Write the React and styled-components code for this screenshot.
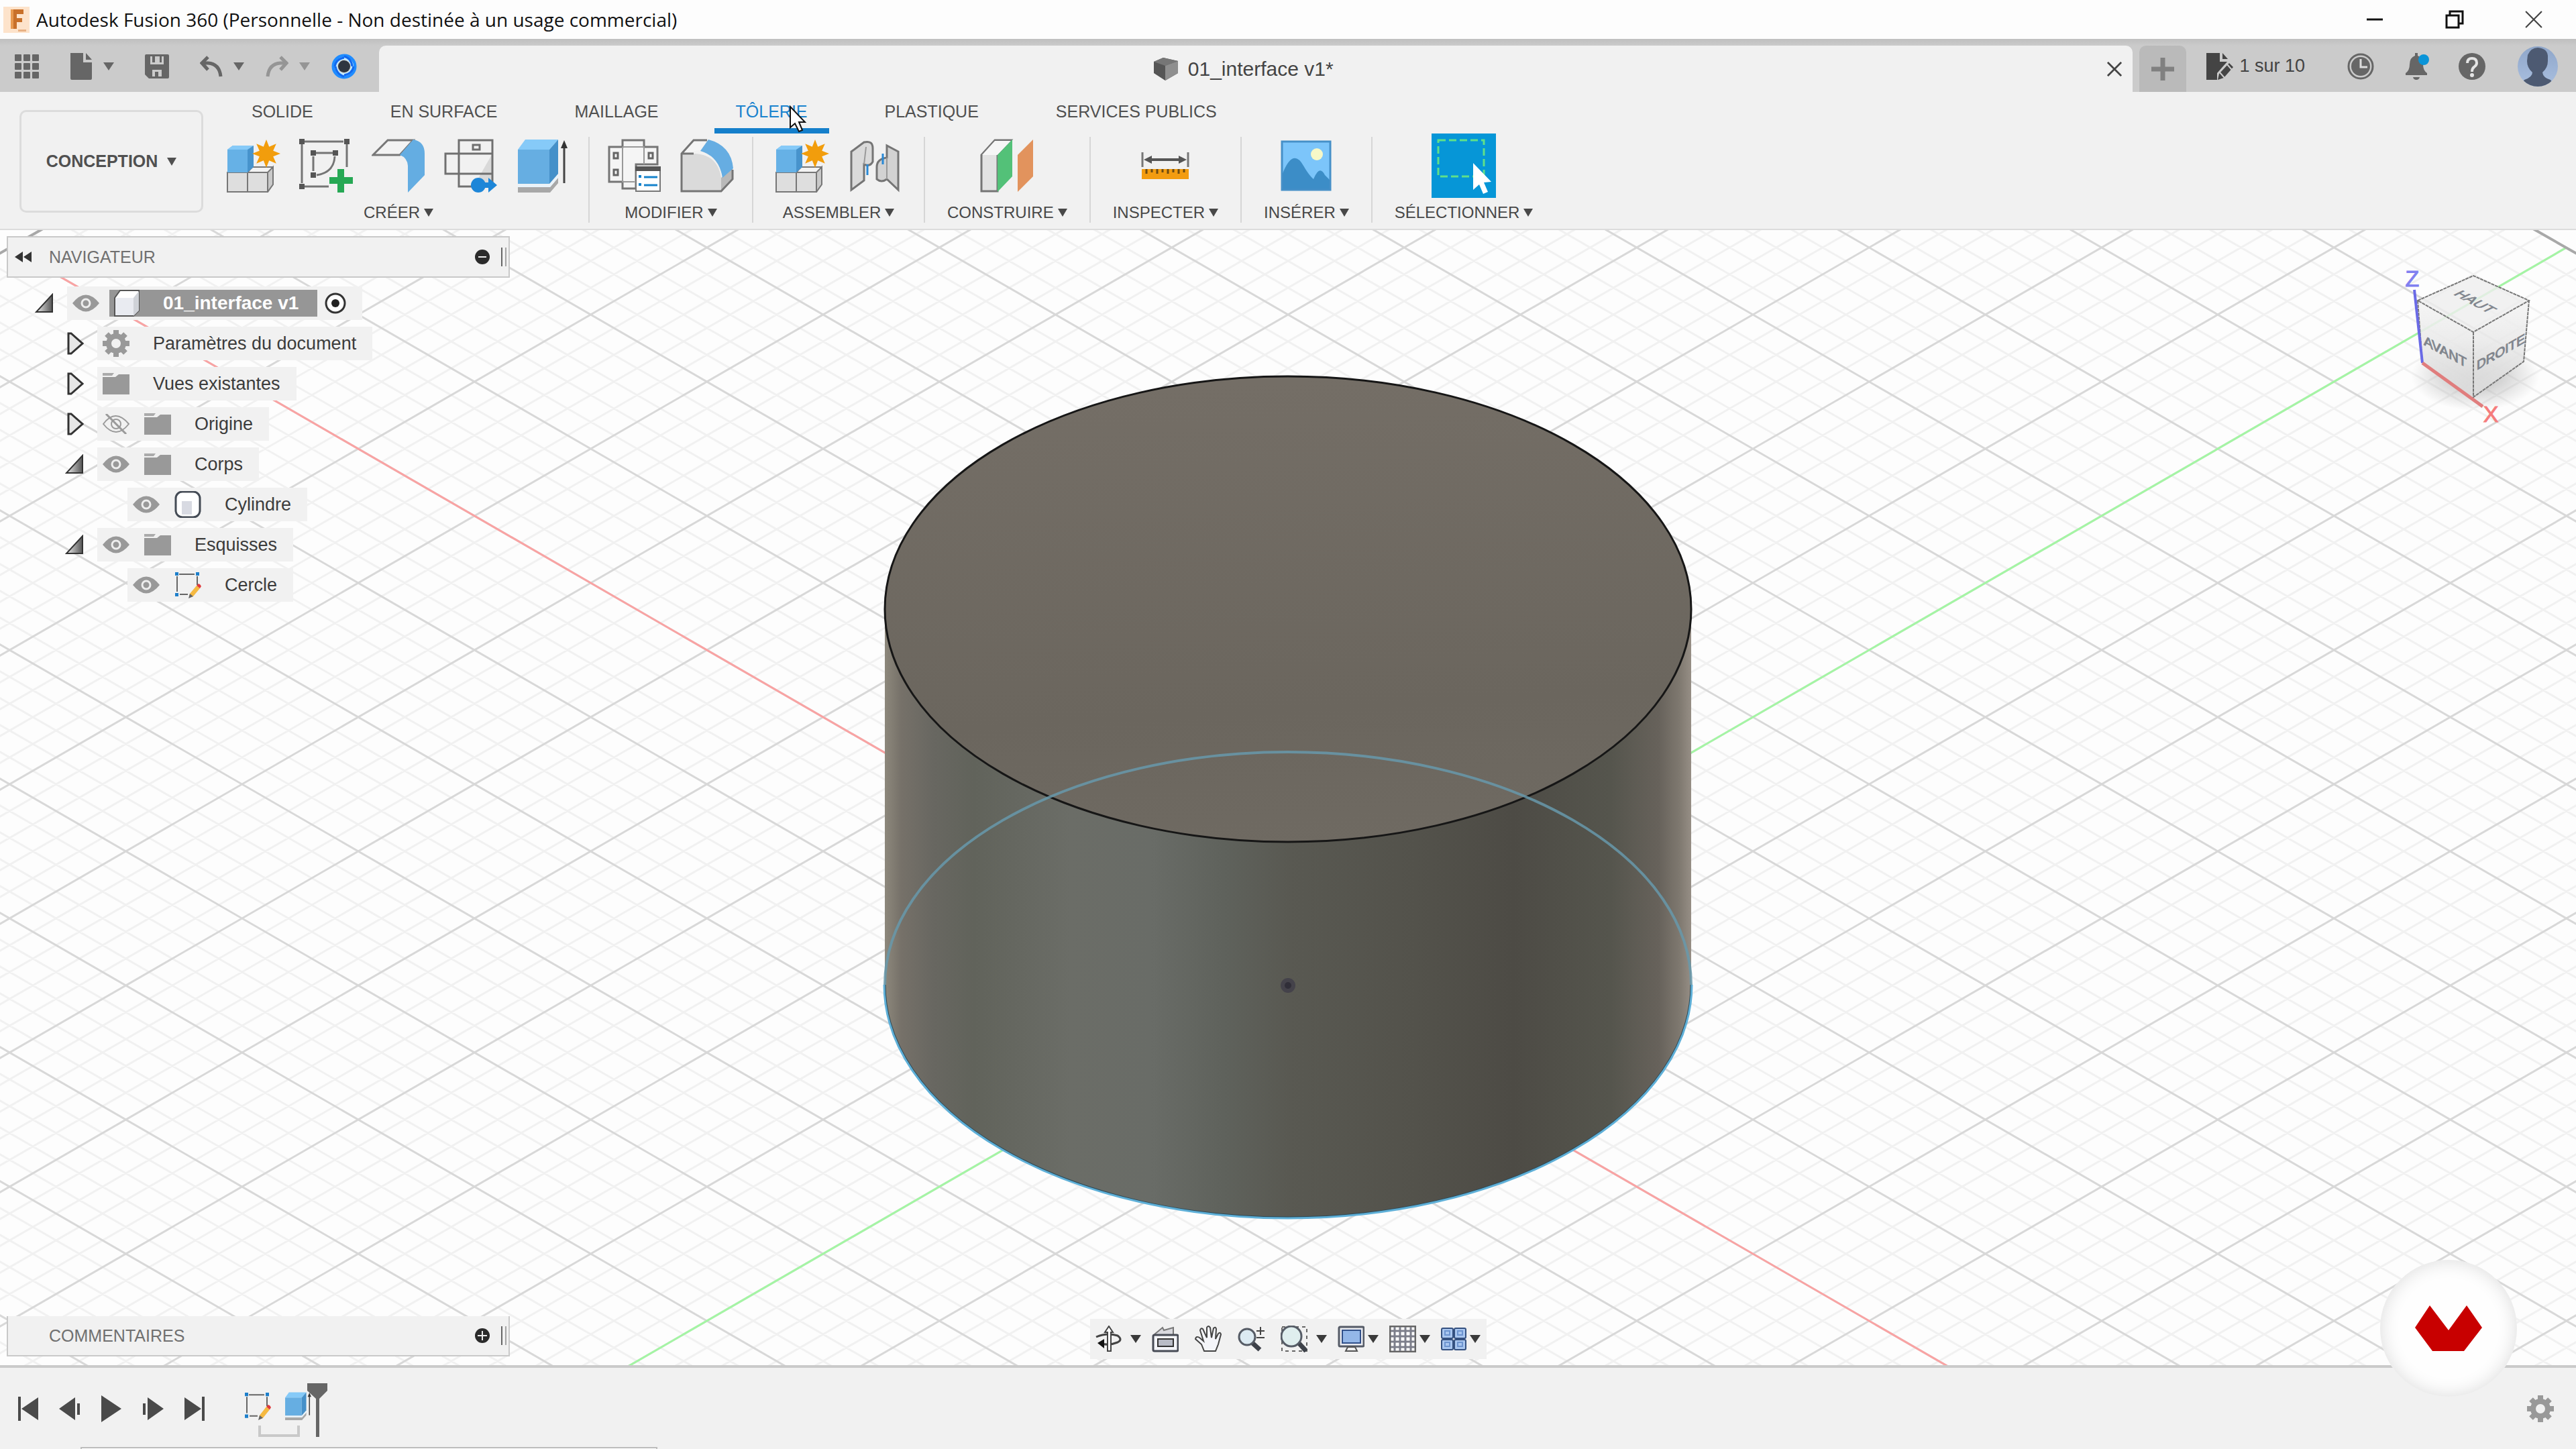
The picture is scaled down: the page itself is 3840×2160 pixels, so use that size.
import React from 'react'
import styled, { createGlobalStyle, css } from 'styled-components'

const GlobalStyle = createGlobalStyle`
	* { box-sizing: border-box; }
	body {
		margin: 0;
		background: #f1f1f1;
		font-family: "Liberation Sans", Arial, sans-serif;
		color: #444;
	}
	button {
		display: flex;
		align-items: center;
		padding: 0;
		border: 0;
		background: none;
		color: inherit;
		font: inherit;
		cursor: pointer;
	}
	ul { margin: 0; padding: 0; list-style: none; }
	svg { display: block; flex: none; }
`

const Window = styled.div`
	display: flex;
	flex-direction: column;
	min-height: 100vh;
	overflow: hidden;
`

/* ---------- title bar ---------- */

const TitleBar = styled.header`
	display: flex;
	align-items: center;
	gap: 10px;
	height: 58px;
	padding: 0 50px 0 5px;
	background: #fdfdfd;
`

const AppTitle = styled.h1`
	flex: 1;
	margin: 0;
	color: #111;
	font: 400 28px "Open Sans", "Noto Sans", sans-serif;
`

const WindowButtons = styled.div`
	display: flex;
	gap: 91px;
`

/* ---------- tab strip ---------- */

const TabStrip = styled.div`
	display: flex;
	align-items: stretch;
	height: 79px;
	padding: 10px 27px 0 0;
	background: linear-gradient(#bfbfbf, #cbcbcb 10px);
`

const QuickBar = styled.div`
	display: flex;
	align-items: center;
	gap: 46px;
	width: 565px;
	padding: 0 0 8px 22px;
	color: #666;
`

const QuickGroup = styled.div`
	display: flex;
	align-items: center;
	gap: 32px;
`

const QuickButton = styled.button`
	gap: 16px;
	color: ${props => props.$faded ? '#959595' : '#666'};
`

const DocumentTab = styled.div`
	flex: 1;
	display: flex;
	align-items: center;
	padding: 0 16px 0 0;
	border-radius: 10px 10px 0 0;
	background: #f1f1f1;
`

const DocumentName = styled.div`
	flex: 1;
	display: flex;
	justify-content: center;
	align-items: center;
	gap: 14px;
	font-size: 30px;
`

const NewTab = styled.button`
	justify-content: center;
	width: 70px;
	margin: 0 30px 0 10px;
	border-radius: 10px 10px 0 0;
	background: #bababa;
`

const Account = styled.div`
	display: flex;
	align-items: center;
	gap: 43px;
	padding-bottom: 8px;
	color: #666;
`

const Jobs = styled.button`
	gap: 8px;
	margin-right: 20px;
	color: #444;
	font-size: 27px;
`

const Profile = styled.button`
	margin-left: 5px;
`

/* ---------- ribbon ---------- */

const Ribbon = styled.div`
	display: flex;
	padding-left: 29px;
	border-bottom: 2px solid #dcdcdc;
	background: #f1f1f1;
`

const Workspace = styled.button`
	justify-content: center;
	gap: 14px;
	width: 274px;
	height: 153px;
	margin: 27px 8px 24px 0;
	border: 3px solid #dcdcdc;
	border-radius: 10px;
	font-size: 25px;
	font-weight: 700;
	color: #505050;
`

const RibbonBody = styled.div`
	flex: 1;
`

const Tabs = styled.div`
	display: flex;
	gap: 51px;
	padding-left: 32px;
`

const Tab = styled.button`
	position: relative;
	padding: 15px 32px 11px;
	border-bottom: 8px solid ${props => props.$active ? '#157fcb' : 'transparent'};
	color: ${props => props.$active ? '#1b83ce' : '#505050'};
	font-size: 25px;
	line-height: 28px;
`

const Pointer = styled.span`
	position: absolute;
	top: 20px;
	left: 111px;
	z-index: 2;
`

const Groups = styled.div`
	display: flex;
`

const Group = styled.section`
	display: flex;
	flex-direction: column;
	align-items: center;
	gap: 8px;
	padding: 0 ${props => props.$tight ? 27 : 33}px 10px;

	& + & {
		border-left: 2px solid #dadada;
		border-image: linear-gradient(#f1f1f1 6px, #d6d6d6 6px, #d6d6d6 132px, #f1f1f1 132px) 1;
	}
`

const GroupTools = styled.div`
	display: flex;
	align-items: center;
	gap: 28px;
	height: 96px;
`

const SelectTool = styled.button`
	justify-content: center;
	width: 96px;
	height: 96px;
	background: #0696d7;
`

const GroupLabel = styled.button`
	gap: 6px;
	font-size: 24px;
	line-height: 28px;
	color: #484848;
`

/* ---------- viewport ---------- */

const Viewport = styled.main`
	position: relative;
	flex: 1;
	display: flex;
	flex-direction: column;
	justify-content: space-between;
	background: #fdfdfd;
`

const Scene = styled.svg`
	position: absolute;
	inset: 0;
	width: 100%;
	height: 100%;
`

const Layer = styled.div`
	position: relative;
	display: flex;
	justify-content: space-between;
	align-items: flex-start;
	padding: 9px 46px 0 10px;
`

const Browser = styled.aside`
	width: 750px;
`

const PanelHeader = styled.div`
	display: flex;
	align-items: center;
	gap: 12px;
	width: 750px;
	height: 62px;
	padding: 0 3px 0 10px;
	border: 2px solid #c9c9c9;
	background: #f1f1f1;
	font-size: 25px;
	color: #707070;

	${props => props.$docked && css`
		height: 60px;
		margin-bottom: 4px;
		border-top: 0;
	`}
`

const PanelTitle = styled.span`
	flex: 1;
	padding-left: ${props => props.$indent ? 51 : 13}px;
`

const Grip = styled.span`
	width: 8px;
	height: 28px;
	margin-left: 4px;
	border-left: 2px solid #666;
	border-right: 2px solid #a5a5a5;
`

const Tree = styled.ul`
	display: flex;
	flex-direction: column;
	gap: 10px;
	padding: 13px 0 0;
`

const TreeRow = styled.li`
	display: flex;
	align-items: center;
	gap: 20px;
	height: 50px;
	padding-left: ${props => 42 + props.$level * 45}px;
`

const Twisty = styled.button`
	width: 28px;
	height: 40px;
	justify-content: center;
`

const NodeBody = styled.div`
	display: flex;
	align-items: center;
	gap: 22px;
	height: 50px;
	padding: 0 24px 0 8px;
	background: #f1f1f1;
	font-size: 27px;
	color: #3c3c3c;
`

const NodeName = styled.span`
	padding-left: 13px;
`

const RootName = styled.span`
	display: flex;
	align-items: center;
	gap: 34px;
	height: 40px;
	margin: 0 -11px 0 -7px;
	padding: 0 28px 0 6px;
	background: #969696;
	color: #fff;
	font-size: 28px;
	font-weight: 700;
`

const BottomLayer = styled.div`
	position: relative;
	display: grid;
	grid-template-columns: 1fr auto 1fr;
	align-items: end;
	padding: 0 10px 9px;
`

const NavBar = styled.div`
	display: flex;
	align-items: center;
	gap: 16px;
	height: 60px;
	padding: 0 9px 0 7px;
	background: #f1f1f1;
	color: #3a3a3a;
`

const NavTool = styled.button`
	gap: ${props => props.$wide ? 13 : 5}px;
	padding-right: ${props => props.$plain ? 8 : 0}px;
`

const Brand = styled.a`
	position: absolute;
	right: 88px;
	bottom: -47px;
	z-index: 3;
	display: flex;
	justify-content: center;
	align-items: center;
	width: 204px;
	height: 204px;
	border-radius: 50%;
	background: #fefefe;
	box-shadow: inset 0 0 28px #dcdcdc;
`

/* ---------- timeline ---------- */

const Timeline = styled.footer`
	border-top: 4px solid #cacaca;
	background: #f1f1f1;
`

const TimelineRow = styled.div`
	display: flex;
	align-items: flex-start;
	padding: 23px 33px 15px 26px;
`

const Transport = styled.div`
	display: flex;
	gap: 30px;
	padding-top: 18px;
	margin-right: 58px;
`

const Features = styled.div`
	display: flex;
	flex-direction: column;
	gap: 8px;
	padding-top: 13px;
`

const FeatureRow = styled.div`
	display: flex;
	gap: 20px;
`

const Bracket = styled.span`
	width: 62px;
	height: 17px;
	margin-left: 21px;
	border: 4px solid #c9c9c9;
	border-top: 0;
`

const Marker = styled.div`
	flex: 1;
	margin-left: -8px;
`

const SettingsButton = styled.button`
	padding-top: 18px;
`

const TaskEdge = styled.div`
	width: 860px;
	height: 3px;
	margin-left: 120px;
	border: 2px solid #bdbdbd;
	border-bottom: 0;
	background: #fff;
`

/* ---------- icons ---------- */

const Icon = ({ w = 40, h = w, box, children, ...rest }) => (
	<svg width={w} height={h} viewBox={box || `0 0 ${w} ${h}`} fill="none" aria-hidden="true" {...rest}>{children}</svg>
)

const Caret = ({ size = 16 }) => (
	<Icon w={size} h={12} box="0 0 16 12" preserveAspectRatio="none"><path d="M0 0H16L8 12Z" fill="currentColor" /></Icon>
)

const AppLogo = () => (
	<Icon w={39}>
		<rect width="39" height="39" fill="#fde3cb" />
		<path d="M11 4H30V11H20V17H28V23H20V33H11Z" fill="#c8702a" />
		<path d="M11 4H15V33H11Z" fill="#e8994f" />
		<path d="M22 34H34V37H22Z" fill="#e8b184" />
	</Icon>
)

const GridIcon = () => (
	<Icon w={36}>
		{[0, 13, 26].map(y => [0, 13, 26].map(x => (
			<rect key={`${x}-${y}`} x={x} y={y} width="10" height="10" rx="1" fill="currentColor" />
		)))}
	</Icon>
)

const FileIcon = () => (
	<Icon w={34} h={40}><path d="M1 0H20V14H33V38Q33 40 31 40H3Q1 40 1 38ZM24 0L33 10H24Z" fill="currentColor" /></Icon>
)

const SaveIcon = () => (
	<Icon w={36}>
		<path fillRule="evenodd" d="M2 0H34Q36 0 36 2V34Q36 36 34 36H6L0 30V2Q0 0 2 0ZM8 3V15H28V3ZM11 23V33H15V26H20V33H25V23Z" fill="currentColor" />
		<path d="M11 3H15V12H11ZM22 3H25V12H22Z" fill="currentColor" />
	</Icon>
)

const UndoIcon = ({ flip }) => (
	<Icon w={34} h={32} box="0 0 34 32">
		<g transform={flip ? 'translate(34 0) scale(-1 1)' : undefined} stroke="currentColor" strokeWidth="5">
			<path d="M12 2L3 11L12 21" />
			<path d="M3 11H12Q29 12 31 31" />
		</g>
	</Icon>
)

const ExtensionIcon = () => (
	<Icon w={38} h={40}>
		<circle cx="19" cy="20" r="16" stroke="#1f8cff" strokeWidth="5" />
		<circle cx="19" cy="20" r="12" stroke="#c3ecff" strokeWidth="4" />
		<path d="M19 5Q30 8 31 20M33 20Q31 31 19 33M19 35Q8 32 6 20M5 20Q7 9 19 7" stroke="#1268ee" strokeWidth="3" />
		<circle cx="19" cy="20" r="9" fill="#2e3540" />
	</Icon>
)

const DocumentIcon = () => (
	<Icon w={38} h={36}>
		<path d="M1 7L15 1L37 6V24L18 35L1 24Z" fill="#555" />
		<path d="M1 7L15 1L37 6L18 13Z" fill="#767676" />
		<path d="M18 13L37 6V24L18 35Z" fill="#8f8f8f" />
	</Icon>
)

const CloseIcon = ({ size = 24, width = 3 }) => (
	<Icon w={size} box="0 0 24 24"><path d="M1 1L23 23M23 1L1 23" stroke="currentColor" strokeWidth={width} /></Icon>
)

const JobIcon = () => (
	<Icon w={41} h={40}>
		<path d="M0 0H20V13H31L16 30V40H0ZM24 0L32 9H24Z" fill="currentColor" />
		<path d="M19 31L34 15L40 21L26 37L17 40Z" fill="currentColor" />
		<path d="M31 17L38 25M20 29L27 37" stroke="#cbcbcb" strokeWidth="2" />
	</Icon>
)

const ClockIcon = () => (
	<Icon>
		<circle cx="20" cy="20" r="18" stroke="currentColor" strokeWidth="3" />
		<circle cx="20" cy="20" r="14" fill="currentColor" />
		<path d="M20 9V21H30" stroke="#dcdcdc" strokeWidth="3" />
	</Icon>
)

const BellIcon = () => (
	<Icon>
		<path d="M18 0H22V4Q30 7 30 17Q30 26 36 30V33H4V30Q10 26 10 17Q10 7 18 4ZM15 36H25Q24 40 20 40Q16 40 15 36Z" fill="currentColor" />
		<circle cx="31" cy="10" r="8" fill="#0a94d8" />
	</Icon>
)

const HelpIcon = () => (
	<Icon>
		<circle cx="20" cy="20" r="20" fill="currentColor" />
		<path d="M13 15Q13 8 20 8Q27 8 27 15Q27 18 23 21Q20 23 20 28" stroke="#e4e4e4" strokeWidth="4" />
		<circle cx="20" cy="33" r="3" fill="#e4e4e4" />
	</Icon>
)

const Avatar = () => (
	<Icon w={60}>
		<defs>
			<clipPath id="avatar"><circle cx="30" cy="30" r="30" /></clipPath>
			<linearGradient id="avatarSky" x2="0" y2="1"><stop stopColor="#8fa6c9" /><stop offset="1" stopColor="#a9bfe0" /></linearGradient>
		</defs>
		<g clipPath="url(#avatar)">
			<rect width="60" height="60" fill="url(#avatarSky)" />
			<path d="M15 13Q20 2 30 2Q44 3 45 14V22Q45 32 37 39Q38 47 49 50L56 60H4L10 50Q22 46 22 39Q14 32 14 22Z" fill="#4d5a72" />
		</g>
	</Icon>
)

const Star = () => {
	const points = Array.from({ length: 16 }, (_, i) => {
		const r = i % 2 ? 11 : 21
		const a = i * Math.PI / 8
		return `${(59 + r * Math.sin(a)).toFixed(1)},${(22 - r * Math.cos(a)).toFixed(1)}`
	}).join(' ')
	return <polygon points={points} fill="#f29d0c" />
}

const ComponentIcon = () => (
	<Icon w={80}>
		<path d="M31 50L40 42H70V68L62 80H31Z" fill="#c9c9c9" />
		<path d="M31 50L39 43H69L62 50Z" fill="#f3f3f3" />
		<path d="M1 50H31V79H1ZM31 50H61V79H31Z" fill="#dedede" stroke="#777" strokeWidth="2" />
		<path d="M61 50L69 42V68L61 79M31 50L38 42H69" stroke="#777" strokeWidth="2" />
		<path d="M1 16L9 10H40L31 16V50H1Z" fill="#66b1e6" />
		<path d="M1 16L9 10H40L31 16Z" fill="#86caf8" />
		<path d="M31 16L40 10V42L31 50Z" fill="#4793cc" />
		<Star />
	</Icon>
)

const SketchCreateIcon = () => (
	<Icon w={80}>
		<path d="M8 4H66M4 8V66M8 71H44M71 8V42" stroke="#757575" strokeWidth="3" />
		<path d="M24 21H50M21 26V48M53 26Q52 50 26 54" stroke="#757575" strokeWidth="3" />
		<path d="M0 0H8V8H0ZM67 0H75V8H67ZM0 67H8V75H0ZM17 17H25V25H17ZM50 17H58V25H50ZM17 50H25V58H17Z" fill="#555" />
		<path d="M57 45H67V57H80V67H67V80H57V67H45V57H57Z" fill="#26a854" />
	</Icon>
)

const FlangeIcon = () => (
	<Icon w={80}>
		<path d="M24 2H62L42 24H2Z" fill="#f3f3f3" stroke="#777" strokeWidth="3" />
		<path d="M62 1Q79 4 79 22V54L54 80V40Q53 28 42 24Z" fill="#64ade2" />
	</Icon>
)

const UnfoldIcon = () => (
	<Icon w={80}>
		<path d="M22 2H72V71H22Z" fill="#f1f1f1" />
		<path d="M72 22L44 71H72Z" fill="#d9d9d9" />
		<path d="M22 2H72V71H22ZM2 22H72V52H2Z" stroke="#707070" strokeWidth="3" />
		<path d="M43 9H53V16H43Z" stroke="#707070" strokeWidth="3" />
		<circle cx="51" cy="69" r="11" fill="#1d86d8" />
		<path d="M56 65H66V58L79 69L66 80V73H56Z" fill="#1d86d8" />
	</Icon>
)

const ExtrudeIcon = ({ size = 80 }) => (
	<Icon w={size} box="0 0 80 80">
		<path d="M2 72L50 72L62 58V66L50 80H2Z" fill="#a8a8a8" />
		<path d="M2 68H49L62 53V58L50 72H2Z" fill="#e9f3fa" />
		<path d="M2 16L13 1H62L49 16Z" fill="#86caf8" />
		<path d="M2 16H49V67H2Z" fill="#66aee2" />
		<path d="M49 16L62 1V52L49 67Z" fill="#4590c9" />
		<path d="M71 12V66" stroke="#444" strokeWidth="3" />
		<path d="M71 2L76 14H66Z" fill="#333" />
	</Icon>
)

const RulesIcon = () => (
	<Icon w={80}>
		<path d="M22 2H54V12H74V38H42V74H22V64H2V12H22Z" fill="#f5f5f5" stroke="#757575" strokeWidth="3" />
		<path d="M22 12H54V38M22 12V64H40" stroke="#999" strokeWidth="2" />
		<path d="M9 21H15V29H9ZM61 21H67V29H61ZM9 46H15V54H9Z" stroke="#666" strokeWidth="3" />
		<rect x="42" y="42" width="36" height="36" fill="#fff" stroke="#777" strokeWidth="2" />
		<path d="M41 41H79V48H41Z" fill="#555" />
		<path d="M46 54H50V58H46ZM46 66H50V70H46Z" fill="#1683cc" />
		<path d="M54 57H74M54 69H74" stroke="#1683cc" strokeWidth="3" />
	</Icon>
)

const BendIcon = () => (
	<Icon w={80}>
		<path d="M2 22L20 2H40L32 16Z" fill="#f5f5f5" />
		<path d="M2 22H22Q56 24 61 58V78H2Z" fill="#dadada" />
		<path d="M61 58L78 44V60L61 78Z" fill="#b9b9b9" />
		<path d="M42 1Q76 10 79 44L63 58Q58 26 30 18Z" fill="#66ade2" />
		<path d="M40 2H20L2 22V78H61L78 60V46M2 22H20" stroke="#757575" strokeWidth="3" />
	</Icon>
)

const JointIcon = () => (
	<Icon w={80}>
		<path d="M5 19L24 5Q37 2 37 14V34Q33 42 24 38V62L5 76Z" fill="#dadada" stroke="#757575" strokeWidth="3" />
		<path d="M75 19L58 10V28Q43 30 43 42V60Q50 66 58 60L75 76Z" fill="#d2d2d2" stroke="#757575" strokeWidth="3" />
		<path d="M24 38L27 12M58 28V60" stroke="#999" strokeWidth="2" />
		<path d="M29 38V54M52 22V38" stroke="#2989d6" strokeWidth="3" />
	</Icon>
)

const PlaneIcon = () => (
	<Icon w={80}>
		<path d="M2 24L22 2H46L26 24V78H2Z" fill="#e2e2e2" stroke="#757575" strokeWidth="3" />
		<path d="M3 24L22 3H46L26 24Z" fill="#f6f6f6" />
		<path d="M26 24L48 1V56L26 79Z" fill="#53c178" />
		<path d="M56 24L79 1V56L56 79Z" fill="#e2935d" />
	</Icon>
)

const MeasureIcon = () => (
	<Icon w={80}>
		<path d="M6 20V42M74 20V42" stroke="#777" strokeWidth="3" />
		<path d="M14 31H66" stroke="#555" strokeWidth="4" />
		<path d="M8 31L20 25V37ZM72 31L60 25V37Z" fill="#555" />
		<rect x="5" y="45" width="70" height="15" fill="#f39c10" />
		<path d="M12 45V52M20 45V50M28 45V52M36 45V50M44 45V52M52 45V50M60 45V52M68 45V50" stroke="#6d4a10" strokeWidth="3" />
	</Icon>
)

const ImageIcon = () => (
	<Icon w={76}>
		<path d="M2 2H74V74H2Z" fill="#7cc5fa" />
		<path d="M2 52Q18 10 34 38Q42 52 49 58Q58 36 66 52L74 60V74H2Z" fill="#3c8dc7" />
		<circle cx="54" cy="21" r="9" fill="#f6f8c8" />
		<path d="M2 2H74V74H2Z" stroke="#4690c8" strokeWidth="3" />
	</Icon>
)

const SelectIcon = () => (
	<Icon w={88}>
		<path d="M6 6H74V60H6Z" stroke="#5fe08a" strokeWidth="3" strokeDasharray="11 5" />
		<path d="M58 40V80L67 72L73 86L80 83L74 69L85 68Z" fill="#fff" />
	</Icon>
)

const CursorIcon = () => (
	<Icon w={26} h={42}><path d="M2 2V33L9 27L15 39L20 37L15 25H24Z" fill="#fff" stroke="#111" strokeWidth="2" /></Icon>
)

const RewindIcon = () => (
	<Icon w={26} h={18}><path d="M12 1V17L0 9ZM25 1V17L13 9Z" fill="#333" /></Icon>
)

const DotButtonIcon = ({ plus }) => (
	<Icon w={24}>
		<circle cx="12" cy="12" r="11" fill="#2b2b2b" />
		<path d={plus ? 'M5 12H19M12 5V19' : 'M6 12H18'} stroke="#eee" strokeWidth="2" />
	</Icon>
)

const OpenArrow = () => (
	<Icon w={28} h={30}>
		<defs><linearGradient id="twist"><stop stopColor="#eee" /><stop offset="1" stopColor="#555" /></linearGradient></defs>
		<path d="M26 2V28H2Z" fill="url(#twist)" stroke="#333" strokeWidth="2" />
	</Icon>
)

const ClosedArrow = () => (
	<Icon w={28} h={34}><path d="M5 2H9L26 17L9 32H5Z" fill="#e6e6e6" stroke="#333" strokeWidth="3" /></Icon>
)

const EyeIcon = ({ off }) => (
	<Icon h={30}>
		{off ? (
			<g stroke="#9a9a9a" strokeWidth="2">
				<path d="M1 15Q19 -9 39 15Q20 39 1 15Z" />
				<circle cx="20" cy="15" r="7" />
				<path d="M5 0L35 30" strokeWidth="3" />
			</g>
		) : (
			<g>
				<path d="M0 15Q20 -10 40 15Q20 40 0 15Z" fill="#999" />
				<circle cx="20" cy="15" r="6" stroke="#eee" strokeWidth="3" />
			</g>
		)}
	</Icon>
)

const FolderIcon = () => (
	<Icon h={34}><path d="M0 7H19L24 3H40V33H0Z" fill="#999" /><path d="M0 1H17L14 5H0Z" fill="#aaa" /></Icon>
)

const GearIcon = () => (
	<Icon>
		<g stroke="#999" strokeWidth="8">
			<path d="M20 0V10M20 30V40M0 20H10M30 20H40M6 6L13 13M27 27L34 34M34 6L27 13M13 27L6 34" />
			<circle cx="20" cy="20" r="11" />
		</g>
	</Icon>
)

const CubeIcon = () => (
	<Icon w={40}>
		<path d="M2 12L10 1H38V31L30 39H2Z" fill="#fff" stroke="#555" strokeWidth="2" />
		<path d="M30 12L38 2V31L30 39Z" fill="#cfd2d8" />
		<path d="M3 12H30V38H3Z" fill="#e9ebf1" />
	</Icon>
)

const CylinderIcon = () => (
	<Icon w={40}>
		<rect x="2" y="1" width="36" height="38" rx="10" fill="#fff" stroke="#444b55" strokeWidth="3" />
		<rect x="11" y="15" width="15" height="20" fill="#d8dae2" />
	</Icon>
)

const SketchIcon = ({ h = 40 }) => (
	<Icon w={40} h={h} box="0 0 40 40" preserveAspectRatio="none">
		<path d="M7 4H30M4 7V30M34 7V20M8 34H20" stroke="#666" strokeWidth="2" />
		<path d="M1 1H6V6H1ZM32 1H37V6H32ZM1 32H6V37H1Z" fill="#1d7fcb" />
		<path d="M23 33L33 21L38 25L28 37L22 39Z" fill="#f5b941" />
		<path d="M33 21L36 18Q39 19 40 22L38 25Z" fill="#e0393b" />
		<path d="M23 33L28 37L21 40Z" fill="#666" />
	</Icon>
)

const TargetIcon = () => (
	<Icon w={32}>
		<circle cx="16" cy="16" r="14" fill="#fff" stroke="#333" strokeWidth="3" />
		<circle cx="16" cy="16" r="6" fill="#222" />
	</Icon>
)

const OrbitIcon = () => (
	<Icon>
		<path d="M2 17Q18 10 34 15Q42 21 34 25Q22 30 10 27" stroke="#444" strokeWidth="3" />
		<path d="M19 38V10H15L21 1L27 10H24V38Z" fill="#fff" stroke="#444" strokeWidth="2" />
		<path d="M4 26L14 20V34Z" fill="#111" />
	</Icon>
)

const LookIcon = () => (
	<Icon>
		<path d="M4 13L16 3L18 7L32 3V13" fill="#d9d9de" stroke="#777" strokeWidth="2" />
		<rect x="2" y="14" width="37" height="24" rx="2" fill="#f4f5f9" stroke="#474b55" strokeWidth="3" />
		<rect x="9" y="20" width="23" height="11" fill="#b9bcc6" stroke="#333" strokeWidth="2" />
	</Icon>
)

const HandIcon = () => (
	<Icon>
		<path d="M14 38L10 28L1 20Q2 15 7 18L13 23L8 7Q9 3 12 5L18 18V3Q20 -1 23 3L25 18L28 4Q31 1 32 5L31 20L35 12Q38 9 39 13L35 28L31 38Z" fill="#f4f5f9" stroke="#444" strokeWidth="2" />
	</Icon>
)

const ZoomIcon = () => (
	<Icon>
		<path d="M22 26L33 36" stroke="#3d4149" strokeWidth="7" />
		<circle cx="14" cy="17" r="12" fill="#dceaf2" stroke="#565c66" strokeWidth="3" />
		<path d="M28 8H40M34 2V14M28 18H40" stroke="#444" strokeWidth="2" />
	</Icon>
)

const FitIcon = () => (
	<Icon>
		<path d="M2 2H39V38H2Z" stroke="#666" strokeWidth="2" strokeDasharray="5 5" />
		<path d="M27 26L38 38" stroke="#3d4149" strokeWidth="7" />
		<circle cx="16" cy="16" r="15" fill="#dfeeee" stroke="#565c66" strokeWidth="3" />
	</Icon>
)

const DisplayIcon = () => (
	<Icon>
		<rect x="2" y="2" width="37" height="29" rx="2" fill="#e9ebf0" stroke="#555b66" strokeWidth="3" />
		<rect x="7" y="7" width="27" height="19" fill="#94b7e8" stroke="#31508a" strokeWidth="2" />
		<path d="M15 32H26L29 38H12Z" fill="#eee" stroke="#555" strokeWidth="2" />
	</Icon>
)

const LayoutGridIcon = () => (
	<Icon>
		<rect x="1" y="1" width="38" height="38" fill="#fff" stroke="#666" strokeWidth="3" />
		<path d="M8 2V38M16 2V38M24 2V38M32 2V38M2 8H38M2 16H38M2 24H38M2 32H38" stroke="#7c7e8a" strokeWidth="3" />
	</Icon>
)

const ViewportsIcon = () => (
	<Icon w={38} h={34}>
		{[1, 20].map(x => [1, 18].map(y => (
			<g key={`${x}-${y}`}>
				<rect x={x} y={y} width="17" height="15" rx="2" fill="#a9c6ef" stroke="#34507f" strokeWidth="2" />
				<rect x={x + 5} y={y + 4} width="7" height="6" stroke="#6d94cf" strokeWidth="2" />
			</g>
		)))}
	</Icon>
)

const MarkerIcon = () => (
	<Icon w={30} h={80}><path d="M0 0H30V11L18 23V80H13V23L0 11Z" fill="#666" /></Icon>
)

const TRANSPORT = [
	{ name: 'Début', d: 'M1 0H5V36H1ZM31 1V35L6 18Z' },
	{ name: 'Précédent', d: 'M24 1V35L0 18ZM27 10H31V27H27Z' },
	{ name: 'Lecture', d: 'M1 -2V38L31 18Z' },
	{ name: 'Suivant', d: 'M8 1V35L32 18ZM1 10H5V27H1Z' },
	{ name: 'Fin', d: 'M27 0H31V36H27ZM1 1V35L26 18Z' },
]

/* ---------- 3D scene ---------- */

// isometric grid around the origin, one major cell is 346.4 x 200
const ORIGIN = { x: 1920, y: 1469 }
const SLOPE = 0.5772

const gridPath = (major) => {
	let d = ''
	for (let k = -55; k <= 55; k++) {
		if ((k % 5 === 0) !== major) continue
		const left = ORIGIN.y - SLOPE * 2400 + k * 40
		const right = ORIGIN.y + SLOPE * 2400 + k * 40
		d += `M-480 ${left.toFixed(1)}L4320 ${right.toFixed(1)}M-480 ${right.toFixed(1)}L4320 ${left.toFixed(1)}`
	}
	return d
}

const Model = () => (
	<Scene viewBox="0 343 3840 1692" preserveAspectRatio="xMidYMid slice" aria-label="Cylindre">
		<defs>
			<linearGradient id="side">
				<stop offset="0" stopColor="#8d887c" />
				<stop offset="0.02" stopColor="#767169" />
				<stop offset="0.06" stopColor="#686761" />
				<stop offset="0.11" stopColor="#61635b" />
				<stop offset="0.23" stopColor="#6b6d67" />
				<stop offset="0.33" stopColor="#696c67" />
				<stop offset="0.42" stopColor="#5f625c" />
				<stop offset="0.5" stopColor="#595952" />
				<stop offset="0.66" stopColor="#53524b" />
				<stop offset="0.78" stopColor="#4d4b45" />
				<stop offset="0.9" stopColor="#55554d" />
				<stop offset="0.96" stopColor="#67625b" />
				<stop offset="0.985" stopColor="#7e786f" />
				<stop offset="1" stopColor="#968e85" />
			</linearGradient>
			<linearGradient id="top" x1="0.6" x2="0.7" y2="1">
				<stop offset="0" stopColor="#746e66" />
				<stop offset="0.7" stopColor="#6b665e" />
				<stop offset="1" stopColor="#6f6a62" />
			</linearGradient>
			<clipPath id="gridArea"><path d="M1920 -731L5747 1477L1920 3685L-1907 1477Z" /></clipPath>
		</defs>
		<g clipPath="url(#gridArea)" strokeWidth="3">
			<path d={gridPath(false)} stroke="#f1f1f1" />
			<path d={gridPath(true)} stroke="#d8d8d8" />
			<path d={`M-480 ${ORIGIN.y - SLOPE * 2400}L4320 ${ORIGIN.y + SLOPE * 2400}`} stroke="#f9a3a3" />
			<path d={`M-480 ${ORIGIN.y + SLOPE * 2400}L4320 ${ORIGIN.y - SLOPE * 2400}`} stroke="#a4f5a4" />
		</g>
		<path d="M3755 329L3860 389M85 329L-20 389" stroke="#a8a8a8" strokeWidth="4" />

		<path d="M1319 908V1468A601 347 0 0 0 2521 1468V908Z" fill="url(#side)" />
		<path d="M1319 1468A601 347 0 0 0 2521 1468" fill="none" stroke="#2b4a58" strokeWidth="3" />
		<path d="M1318 1468A602 348 0 0 0 2522 1468" fill="none" stroke="#5fb0d8" strokeWidth="3" />
		<ellipse cx="1920" cy="908" rx="601" ry="347" fill="url(#top)" stroke="#161616" strokeWidth="3" />
		<path d="M1319 1468A601 347 0 0 1 2521 1468" fill="none" stroke="#6799ab" strokeWidth="4" opacity="0.85" />
		<circle cx="1920" cy="1469" r="11" fill="#44424a" />
		<circle cx="1920" cy="1469" r="5" fill="#302e38" />
	</Scene>
)

const CubeDrawing = styled.svg`
	margin-top: 38px;
`

const ViewCube = () => (
	<CubeDrawing width="216" height="250" viewBox="3578 390 216 250" role="img" aria-label="Orientation">
		<defs>
			<radialGradient id="cubeShadow"><stop stopColor="#888" stopOpacity="0.6" /><stop offset="1" stopColor="#888" stopOpacity="0" /></radialGradient>
			<linearGradient id="cubeFace" x2="0" y2="1"><stop stopColor="#f4f4f4" stopOpacity="0.85" /><stop offset="1" stopColor="#dadada" stopOpacity="0.9" /></linearGradient>
		</defs>
		<ellipse cx="3690" cy="560" rx="96" ry="52" fill="url(#cubeShadow)" />
		<path d="M3604 448L3687 495V592L3611 541Z" fill="url(#cubeFace)" />
		<path d="M3770 448L3687 495V592L3762 539Z" fill="url(#cubeFace)" />
		<path d="M3687 411L3770 448L3687 495L3604 448Z" fill="#eee" fillOpacity="0.8" />
		<path d="M3604 448L3687 411L3770 448L3687 495ZM3687 495V592L3762 539L3770 448M3604 448L3611 541" fill="none" stroke="#777" strokeWidth="2" strokeDasharray="5 1" />
		<g fontFamily="Liberation Sans, Arial, sans-serif" textAnchor="middle" fill="#80858d" stroke="#80858d">
			<text transform="matrix(0.75 0.4 -0.75 0.36 3683 453)" fontSize="26">HAUT</text>
			<text transform="translate(3645 531) skewY(28)" fontSize="20">AVANT</text>
			<text transform="translate(3728 531) skewY(-30)" fontSize="19">DROITE</text>
		</g>
		<path d="M3599 432L3611 541" stroke="#6a6ae6" strokeWidth="4" />
		<path d="M3611 541L3701 606" stroke="#e07d7d" strokeWidth="5" />
		<g fontFamily="Liberation Sans, Arial, sans-serif" textAnchor="middle" fontSize="34">
			<text x="3596" y="427" fill="#8080f0" stroke="#8080f0">Z</text>
			<text x="3713" y="629" fill="#f57c7c" stroke="#f57c7c">X</text>
		</g>
	</CubeDrawing>
)

/* ---------- data ---------- */

const TABS = ['SOLIDE', 'EN SURFACE', 'MAILLAGE', 'TÔLERIE', 'PLASTIQUE', 'SERVICES PUBLICS']

const GROUPS = [
	{ label: 'CRÉER', tight: true, tools: [ComponentIcon, SketchCreateIcon, FlangeIcon, UnfoldIcon, ExtrudeIcon] },
	{ label: 'MODIFIER', tight: true, tools: [RulesIcon, BendIcon] },
	{ label: 'ASSEMBLER', tools: [ComponentIcon, JointIcon] },
	{ label: 'CONSTRUIRE', tools: [PlaneIcon] },
	{ label: 'INSPECTER', tools: [MeasureIcon] },
	{ label: 'INSÉRER', tools: [ImageIcon] },
	{ label: 'SÉLECTIONNER', select: true, tools: [SelectIcon] },
]

const NODES = [
	{ name: 'Paramètres du document', level: 1, icon: GearIcon },
	{ name: 'Vues existantes', level: 1, icon: FolderIcon },
	{ name: 'Origine', level: 1, eye: 'off', icon: FolderIcon },
	{ name: 'Corps', level: 1, eye: 'on', open: true, icon: FolderIcon },
	{ name: 'Cylindre', level: 2, eye: 'on', leaf: true, icon: CylinderIcon },
	{ name: 'Esquisses', level: 1, eye: 'on', open: true, icon: FolderIcon },
	{ name: 'Cercle', level: 2, eye: 'on', leaf: true, icon: SketchIcon },
]

const NAV = [
	{ name: 'Orbite', icon: OrbitIcon, menu: true, wide: true },
	{ name: 'Regarder', icon: LookIcon },
	{ name: 'Panoramique', icon: HandIcon },
	{ name: 'Zoom', icon: ZoomIcon },
	{ name: 'Ajuster', icon: FitIcon, menu: true, wide: true },
	{ name: 'Affichage', icon: DisplayIcon, menu: true },
	{ name: 'Grille', icon: LayoutGridIcon, menu: true },
	{ name: 'Fenêtres', icon: ViewportsIcon, menu: true },
]

const App = () => (
	<Window>
		<GlobalStyle />
		<TitleBar>
			<AppLogo />
			<AppTitle>Autodesk Fusion 360 (Personnelle - Non destinée à un usage commercial)</AppTitle>
			<WindowButtons>
				<button aria-label="Réduire"><Icon w={28}><path d="M2 14H26" stroke="#111" strokeWidth="3" /></Icon></button>
				<button aria-label="Restaurer"><Icon w={28}><path d="M2 8H20V26H2ZM7 8V2H26V20H20" stroke="#111" strokeWidth="3" /></Icon></button>
				<button aria-label="Fermer"><CloseIcon size={26} width={2} /></button>
			</WindowButtons>
		</TitleBar>

		<TabStrip>
			<QuickBar>
				<QuickButton aria-label="Panneau de données"><GridIcon /></QuickButton>
				<QuickButton aria-label="Fichier"><FileIcon /><Caret /></QuickButton>
				<QuickButton aria-label="Enregistrer"><SaveIcon /></QuickButton>
				<QuickGroup>
					<QuickButton aria-label="Annuler"><UndoIcon /><Caret /></QuickButton>
					<QuickButton aria-label="Rétablir" $faded><UndoIcon flip /><Caret /></QuickButton>
					<QuickButton aria-label="Extension"><ExtensionIcon /></QuickButton>
				</QuickGroup>
			</QuickBar>
			<DocumentTab>
				<DocumentName><DocumentIcon /><span>01_interface v1*</span></DocumentName>
				<button aria-label="Fermer le document"><CloseIcon size={22} /></button>
			</DocumentTab>
			<NewTab aria-label="Nouvel onglet"><Icon w={34}><path d="M0 17H34M17 0V34" stroke="#808080" strokeWidth="7" /></Icon></NewTab>
			<Account>
				<Jobs><JobIcon /><span>1 sur 10</span></Jobs>
				<button aria-label="Historique"><ClockIcon /></button>
				<button aria-label="Notifications"><BellIcon /></button>
				<button aria-label="Aide"><HelpIcon /></button>
				<Profile aria-label="Compte"><Avatar /></Profile>
			</Account>
		</TabStrip>

		<Ribbon>
			<Workspace>CONCEPTION<Caret size={14} /></Workspace>
			<RibbonBody>
				<Tabs role="tablist">
					{TABS.map(tab => (
						<Tab key={tab} role="tab" aria-selected={tab === 'TÔLERIE'} $active={tab === 'TÔLERIE'}>
							{tab}
							{tab === 'TÔLERIE' && <Pointer><CursorIcon /></Pointer>}
						</Tab>
					))}
				</Tabs>
				<Groups>
					{GROUPS.map(({ label, tight, select, tools }) => (
						<Group key={label} $tight={tight}>
							<GroupTools>
								{tools.map((Tool, i) => select
									? <SelectTool key={i} aria-label="Sélection"><Tool /></SelectTool>
									: <button key={i} aria-label={`${label} ${i + 1}`}><Tool /></button>
								)}
							</GroupTools>
							<GroupLabel>{label}<Caret size={14} /></GroupLabel>
						</Group>
					))}
				</Groups>
			</RibbonBody>
		</Ribbon>

		<Viewport>
			<Model />
			<Layer>
				<Browser>
					<PanelHeader>
						<button aria-label="Replier"><RewindIcon /></button>
						<PanelTitle>NAVIGATEUR</PanelTitle>
						<button aria-label="Masquer"><DotButtonIcon /></button>
						<Grip />
					</PanelHeader>
					<Tree>
						<TreeRow $level={0}>
							<Twisty aria-label="Replier"><OpenArrow /></Twisty>
							<NodeBody>
								<EyeIcon />
								<RootName><CubeIcon />01_interface v1</RootName>
								<TargetIcon />
							</NodeBody>
						</TreeRow>
						{NODES.map(({ name, level, eye, open, leaf, icon: NodeIcon }) => (
							<TreeRow key={name} $level={level}>
								{leaf
									? <Twisty as="span" />
									: <Twisty aria-label={name}>{open ? <OpenArrow /> : <ClosedArrow />}</Twisty>}
								<NodeBody>
									{eye && <EyeIcon off={eye === 'off'} />}
									<NodeIcon />
									<NodeName>{name}</NodeName>
								</NodeBody>
							</TreeRow>
						))}
					</Tree>
				</Browser>
				<ViewCube />
			</Layer>

			<BottomLayer>
				<PanelHeader $docked>
					<PanelTitle $indent>COMMENTAIRES</PanelTitle>
					<button aria-label="Afficher"><DotButtonIcon plus /></button>
					<Grip />
				</PanelHeader>
				<NavBar>
					{NAV.map(({ name, icon: NavIcon, menu, wide }) => (
						<NavTool key={name} aria-label={name} $wide={wide} $plain={!menu}>
							<NavIcon />
							{menu && <Caret />}
						</NavTool>
					))}
				</NavBar>
				<Brand href="#" aria-label="Domestika">
					<Icon w={100} h={68}><path d="M22 0L50 37L77 0L100 33L73 68H26L0 33Z" fill="#c80000" /></Icon>
				</Brand>
			</BottomLayer>
		</Viewport>

		<Timeline>
			<TimelineRow>
				<Transport>
					{TRANSPORT.map(({ name, d }) => (
						<button key={name} aria-label={name}>
							<Icon w={32} h={40} box="0 -2 32 40"><path d={d} fill="#4a4a4a" /></Icon>
						</button>
					))}
				</Transport>
				<Features>
					<FeatureRow>
						<button aria-label="Esquisse"><SketchIcon h={42} /></button>
						<button aria-label="Extrusion"><ExtrudeIcon size={42} /></button>
					</FeatureRow>
					<Bracket />
				</Features>
				<Marker><MarkerIcon /></Marker>
				<SettingsButton aria-label="Paramètres"><GearIcon /></SettingsButton>
			</TimelineRow>
			<TaskEdge />
		</Timeline>
	</Window>
)

export default App
